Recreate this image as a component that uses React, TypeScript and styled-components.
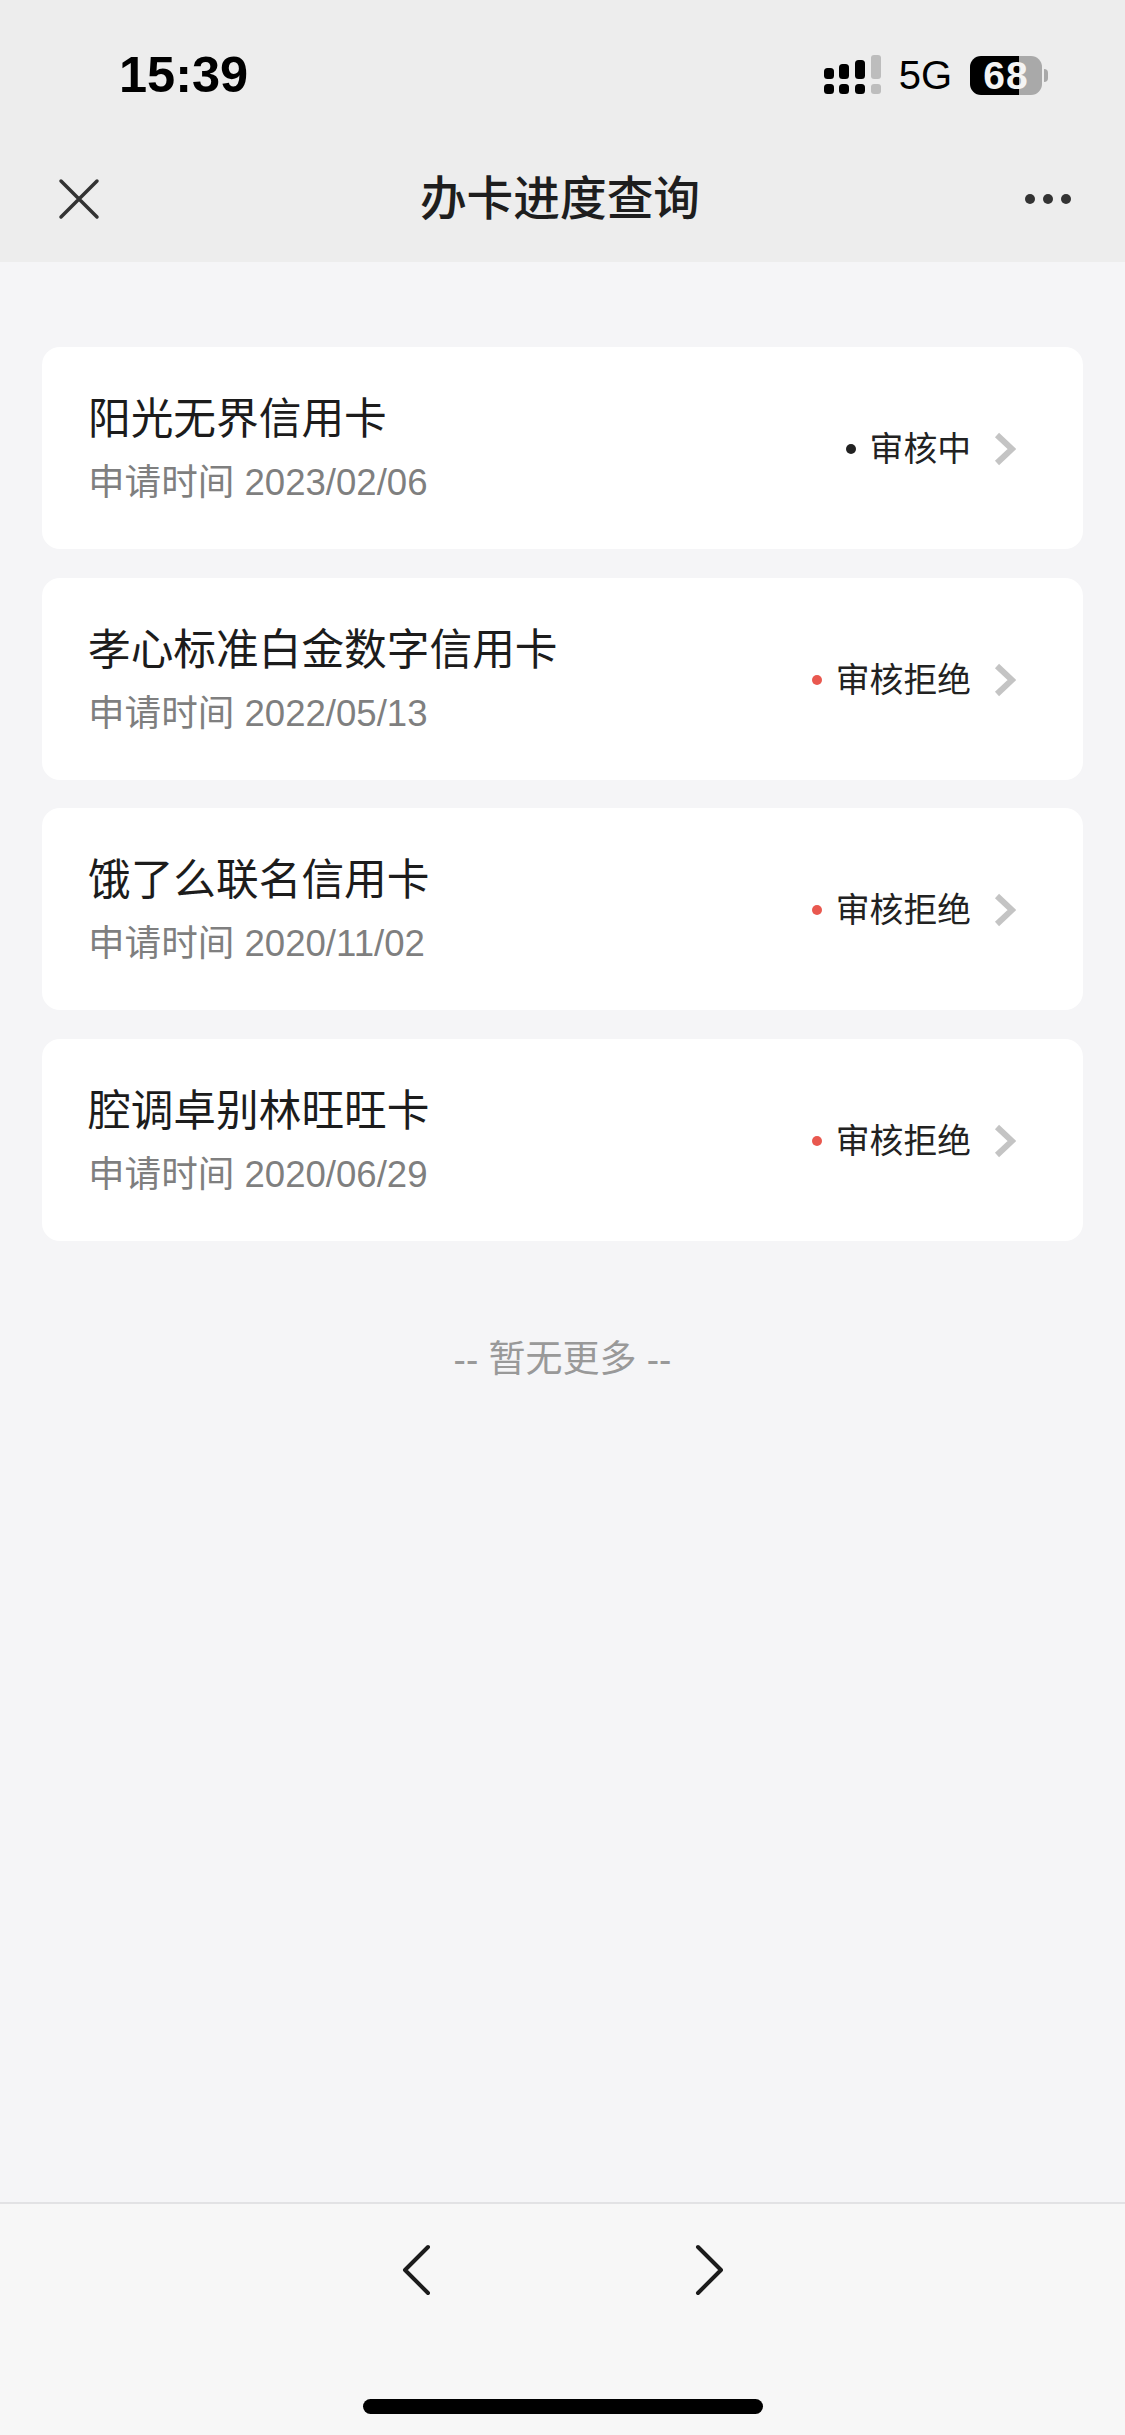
import styled, { createGlobalStyle } from 'styled-components';

const GlobalStyle = createGlobalStyle`
  html, body {
    margin: 0;
    padding: 0;
    background: #f5f5f7;
  }
  * {
    box-sizing: border-box;
  }
`;

const applications = [
  { name: '阳光无界信用卡', date: '2023/02/06', status: '审核中', rejected: false },
  { name: '孝心标准白金数字信用卡', date: '2022/05/13', status: '审核拒绝', rejected: true },
  { name: '饿了么联名信用卡', date: '2020/11/02', status: '审核拒绝', rejected: true },
  { name: '腔调卓别林旺旺卡', date: '2020/06/29', status: '审核拒绝', rejected: true },
];

const Page = styled.div`
  display: flex;
  flex-direction: column;
  width: 1125px;
  height: 2435px;
  overflow: hidden;
  background: #f5f5f7;
  font-family: 'Liberation Sans', 'Noto Sans CJK SC', sans-serif;
  color: #1c1c1c;
`;

const Header = styled.header`
  flex: none;
  height: 262px;
  background: #ededed;
`;

const StatusBar = styled.div`
  display: flex;
  align-items: center;
  justify-content: space-between;
  height: 150px;
  padding: 0 83px 0 119px;
`;

const Time = styled.span`
  font-size: 50.5px;
  font-weight: 700;
  line-height: 50px;
  color: #000;
`;

const StatusIcons = styled.div`
  display: flex;
  align-items: center;
  gap: 18px;
`;

const Network = styled.span`
  font-size: 40px;
  line-height: 42px;
  color: #000;
`;

const Battery = styled.div`
  position: relative;
  width: 72px;
  height: 39px;
  border-radius: 11px;
  background: linear-gradient(to right, #000 0, #000 49px, #a9a9a9 49px);
  color: #f4f4f4;
  font-size: 39px;
  font-weight: 700;
  letter-spacing: 1px;
  line-height: 39px;
  text-align: center;
  &::after {
    content: '';
    position: absolute;
    top: 13px;
    right: -6px;
    width: 4px;
    height: 13px;
    border-radius: 0 4px 4px 0;
    background: #a9a9a9;
  }
`;

const NavBar = styled.div`
  display: grid;
  grid-template-columns: 1fr auto 1fr;
  align-items: center;
  height: 98px;
  padding: 0 54px 0 49px;
`;

const CloseGlyph = styled.svg`
  display: block;
  margin-left: 9px;
`;

const NavTitle = styled.h1`
  margin: 0;
  font-size: 46.7px;
  font-weight: 500;
  line-height: 56px;
  text-align: center;
  color: #1e1e1e;
`;

const MoreButton = styled.div`
  display: flex;
  justify-content: flex-end;
  gap: 8px;
`;

const MoreDot = styled.span`
  width: 10px;
  height: 10px;
  border-radius: 50%;
  background: #333;
`;

const Main = styled.main`
  flex: 1;
  display: flex;
  flex-direction: column;
  padding: 85px 42px 0;
`;

const CardList = styled.div`
  display: flex;
  flex-direction: column;
  gap: 28.5px;
`;

const Card = styled.div`
  display: flex;
  align-items: center;
  justify-content: space-between;
  height: 202px;
  padding: 0 66px 0 46px;
  border-radius: 18px;
  background: #fff;
`;

const CardInfo = styled.div`
  display: flex;
  flex-direction: column;
  gap: 14px;
  margin-top: 2px;
`;

const CardName = styled.div`
  font-size: 42.7px;
  line-height: 54px;
  color: #1c1c1c;
`;

const CardDate = styled.div`
  font-size: 36.6px;
  line-height: 46px;
  color: #7f7f7f;
`;

const CardStatus = styled.div`
  display: flex;
  align-items: center;
  margin-top: 2px;
`;

const StatusDot = styled.span<{ $rejected: boolean }>`
  width: 10px;
  height: 10px;
  margin-right: 14px;
  border-radius: 50%;
  background: ${(p) => (p.$rejected ? '#e9584f' : '#222')};
`;

const StatusLabel = styled.span`
  font-size: 33.8px;
  line-height: 46px;
  color: #222;
`;

const Chevron = styled.svg`
  display: block;
  margin-left: 23px;
  margin-right: 1px;
`;

const EndNote = styled.div`
  margin-top: 96px;
  font-size: 37px;
  line-height: 46px;
  text-align: center;
  color: #999;
`;

const BottomBar = styled.footer`
  flex: none;
  display: flex;
  flex-direction: column;
  align-items: center;
  height: 233px;
  border-top: 2px solid #e2e2e4;
  background: #f7f7f7;
`;

const PagerRow = styled.div`
  display: flex;
  gap: 262px;
  margin-top: 40px;
`;

const HomeIndicator = styled.div`
  width: 400px;
  height: 15px;
  margin-top: 103px;
  border-radius: 8px;
  background: #000;
`;

function SignalIcon() {
  return (
    <svg width="57" height="40" viewBox="0 0 57 40">
      <rect x="0" y="13" width="10" height="11" rx="3.5" fill="#000" />
      <rect x="15" y="9" width="10" height="15" rx="3.5" fill="#000" />
      <rect x="31" y="5" width="10" height="19" rx="3.5" fill="#000" />
      <rect x="47" y="0" width="10" height="24" rx="3" fill="#bdbdbd" />
      <rect x="0" y="29" width="10" height="10" rx="3.5" fill="#000" />
      <rect x="15" y="29" width="10" height="10" rx="3.5" fill="#000" />
      <rect x="31" y="29" width="10" height="10" rx="3.5" fill="#000" />
      <rect x="47" y="29" width="10" height="10" rx="3" fill="#bdbdbd" />
    </svg>
  );
}

function CloseIcon() {
  return (
    <CloseGlyph width="42" height="42" viewBox="0 0 42 42">
      <path d="M3 3 L39 39 M39 3 L3 39" stroke="#333" strokeWidth="3.5" strokeLinecap="round" />
    </CloseGlyph>
  );
}

function CardChevron() {
  return (
    <Chevron width="22" height="34" viewBox="0 0 22 34">
      <path d="M3 3 L18 17 L3 31" fill="none" stroke="#c4c4c4" strokeWidth="6" />
    </Chevron>
  );
}

function PagerIcon({ flip }: { flip?: boolean }) {
  return (
    <svg width="30" height="52" viewBox="0 0 30 52">
      <path
        d={flip ? 'M4 3 L27 26 L4 49' : 'M26 3 L3 26 L26 49'}
        fill="none"
        stroke="#1c1c1c"
        strokeWidth="4"
        strokeLinecap="round"
        strokeLinejoin="round"
      />
    </svg>
  );
}

export default function App() {
  return (
    <Page>
      <GlobalStyle />
      <Header>
        <StatusBar>
          <Time>15:39</Time>
          <StatusIcons>
            <SignalIcon />
            <Network>5G</Network>
            <Battery>68</Battery>
          </StatusIcons>
        </StatusBar>
        <NavBar>
          <CloseIcon />
          <NavTitle>办卡进度查询</NavTitle>
          <MoreButton>
            <MoreDot />
            <MoreDot />
            <MoreDot />
          </MoreButton>
        </NavBar>
      </Header>

      <Main>
        <CardList>
          {applications.map((item) => (
            <Card key={item.name}>
              <CardInfo>
                <CardName>{item.name}</CardName>
                <CardDate>申请时间 {item.date}</CardDate>
              </CardInfo>
              <CardStatus>
                <StatusDot $rejected={item.rejected} />
                <StatusLabel>{item.status}</StatusLabel>
                <CardChevron />
              </CardStatus>
            </Card>
          ))}
        </CardList>
        <EndNote>-- 暂无更多 --</EndNote>
      </Main>

      <BottomBar>
        <PagerRow>
          <PagerIcon />
          <PagerIcon flip />
        </PagerRow>
        <HomeIndicator />
      </BottomBar>
    </Page>
  );
}
